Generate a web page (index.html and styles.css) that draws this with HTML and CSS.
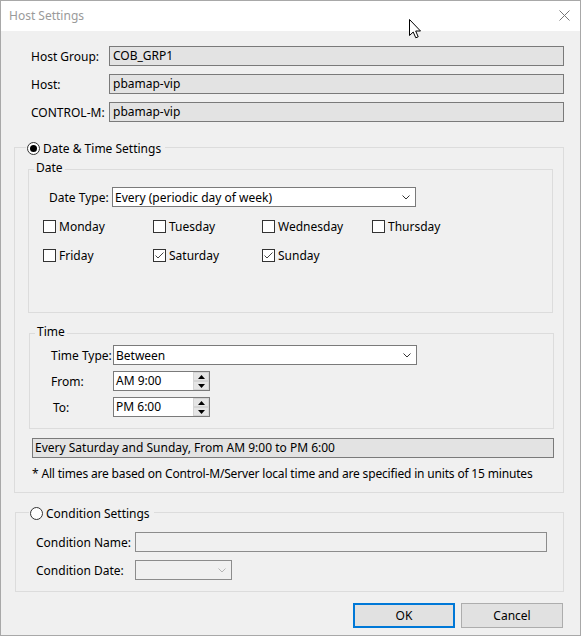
FILE: index.html
```html
<!DOCTYPE html>
<html>
<head>
<meta charset="utf-8">
<link rel="stylesheet" href="styles.css">
</head>
<body>
<div class="window">
  <div class="titlebar">
    <span class="title">Host Settings</span>
    <svg class="close" width="11" height="11" viewBox="0 0 11 11"><path d="M0.5 0.5 L10.5 10.5 M10.5 0.5 L0.5 10.5" stroke="#777" stroke-width="1" fill="none"/></svg>
  </div>
  <div class="content">
    <div class="info">
      <div class="row"><span class="lbl">Host Group:</span><div class="field ro">COB_GRP1</div></div>
      <div class="row"><span class="lbl">Host:</span><div class="field ro">pbamap-vip</div></div>
      <div class="row"><span class="lbl">CONTROL-M:</span><div class="field ro">pbamap-vip</div></div>
    </div>

    <fieldset class="group main">
      <legend class="rlegend main-legend"><span class="rl"><span class="radio on"></span><span>Date &amp; Time Settings</span></span></legend>

      <fieldset class="sub date">
        <legend class="slegend date-legend">Date</legend>
        <div class="datetype">
          <span class="dlbl">Date Type:</span>
          <div class="select wide"><span>Every (periodic day of week)</span><svg class="chev" width="8" height="5" viewBox="0 0 8 5"><path d="M0.5 0.5 L4 4 L7.5 0.5" stroke="#333" fill="none"/></svg></div>
        </div>
        <div class="days">
          <div class="day"><span class="cb"></span>Monday</div>
          <div class="day"><span class="cb"></span>Tuesday</div>
          <div class="day"><span class="cb"></span>Wednesday</div>
          <div class="day"><span class="cb"></span>Thursday</div>
          <div class="day"><span class="cb"></span>Friday</div>
          <div class="day"><span class="cb"><svg width="11" height="11" viewBox="0 0 11 11"><path d="M1.5 5.5 L4 8 L9.5 2.5" stroke="#444" stroke-width="1" fill="none"/></svg></span>Saturday</div>
          <div class="day"><span class="cb"><svg width="11" height="11" viewBox="0 0 11 11"><path d="M1.5 5.5 L4 8 L9.5 2.5" stroke="#444" stroke-width="1" fill="none"/></svg></span>Sunday</div>
        </div>
      </fieldset>

      <fieldset class="sub time">
        <legend class="slegend time-legend">Time</legend>
        <div class="trows">
          <span class="tlbl">Time Type:</span>
          <div class="select wide2"><span>Between</span><svg class="chev" width="8" height="5" viewBox="0 0 8 5"><path d="M0.5 0.5 L4 4 L7.5 0.5" stroke="#333" fill="none"/></svg></div>
          <span class="tlbl">From:</span>
          <div class="spin"><span class="spintext">AM 9:00</span><div class="spinbtns"><div class="sbtn"><svg width="7" height="4" viewBox="0 0 7 4"><path d="M0 4 L3.5 0 L7 4 Z" fill="#000"/></svg></div><div class="sbtn"><svg width="7" height="4" viewBox="0 0 7 4"><path d="M0 0 L3.5 4 L7 0 Z" fill="#000"/></svg></div></div></div>
          <span class="tlbl to">To:</span>
          <div class="spin"><span class="spintext">PM 6:00</span><div class="spinbtns"><div class="sbtn"><svg width="7" height="4" viewBox="0 0 7 4"><path d="M0 4 L3.5 0 L7 4 Z" fill="#000"/></svg></div><div class="sbtn"><svg width="7" height="4" viewBox="0 0 7 4"><path d="M0 0 L3.5 4 L7 0 Z" fill="#000"/></svg></div></div></div>
        </div>
      </fieldset>

      <div class="summary">Every Saturday and Sunday, From AM 9:00 to PM 6:00</div>
      <div class="note">* All times are based on Control-M/Server local time and are specified in units of 15 minutes</div>
    </fieldset>

    <fieldset class="group cond">
      <legend class="rlegend cond-legend"><span class="rl"><span class="radio"></span><span>Condition Settings</span></span></legend>
      <div class="crows">
        <span class="clbl">Condition Name:</span>
        <div class="field dis"></div>
        <span class="clbl">Condition Date:</span>
        <div class="select dis small"><span></span><svg class="chev" width="8" height="5" viewBox="0 0 8 5"><path d="M0.5 0.5 L4 4 L7.5 0.5" stroke="#b5b5b5" fill="none"/></svg></div>
      </div>
    </fieldset>

    <div class="buttons">
      <div class="btn default">OK</div>
      <div class="btn">Cancel</div>
    </div>
  </div>

  <svg class="cursor" width="13" height="20" viewBox="0 0 13 20"><path d="M0.5 0.5 L0.5 16.5 L4.2 13 L6.8 18.8 L9.2 17.8 L6.7 12 L11.5 12 Z" fill="#fff" stroke="#000" stroke-width="1" stroke-linejoin="miter"/></svg>
</div>
</body>
</html>
```

FILE: styles.css
```css
* { box-sizing: border-box; }

body {
  margin: 0;
  font-family: "Noto Sans", "Open Sans", sans-serif;
  font-size: 12px;
  color: #000;
  background: #fff;
}

.window {
  position: relative;
  width: 581px;
  height: 636px;
  border: 1px solid #a8a8a8;
  background: #f0f0f0;
  overflow: hidden;
}

.titlebar {
  height: 30px;
  background: #fff;
  display: flex;
  align-items: center;
  justify-content: space-between;
  padding: 0 10px 1px 8px;
}

.title {
  color: #9a9a9a;
  font-size: 12px;
}

.content {
  padding: 15px 16px 0 13px;
}

.info {
  margin-left: 17px;
  display: flex;
  flex-direction: column;
  gap: 8px;
}

.row {
  display: grid;
  grid-template-columns: 78px 1fr;
  align-items: center;
}

.field {
  height: 20px;
  line-height: 18px;
  border: 1px solid #7a7a7a;
  padding-left: 3px;
  white-space: nowrap;
}

.field.ro { background: #e3e3e3; }
.field.dis { background: #f0f0f0; border-color: #8c8c8c; }

fieldset {
  margin: 0;
  border: 1px solid #dcdcdc;
  min-width: 0;
}

legend {
  line-height: 15px;
  height: 15px;
}

.rl {
  display: flex;
  align-items: center;
  gap: 3px;
  padding-top: 1px;
}

.radio {
  width: 13px;
  height: 13px;
  border: 1px solid #333;
  border-radius: 50%;
  background: #fff;
  display: flex;
  align-items: center;
  justify-content: center;
  flex: none;
}

.radio.on::after {
  content: "";
  width: 7px;
  height: 7px;
  border-radius: 50%;
  background: #000;
}

.group.main {
  margin-top: 18px;
  padding: 7px 10px 10px 13px;
}

.main-legend {
  margin-left: -2px;
  padding: 0 4px 0 1px;
}

.sub.date {
  padding: 10px 10px 50px 14px;
}

.slegend {
  padding: 0 2px;
  line-height: 12px;
}
.date-legend { margin-left: -9px; }

.datetype {
  margin-left: 6px;
  display: flex;
  align-items: center;
}

.dlbl { width: 63px; }

.select {
  height: 20px;
  border: 1px solid #7a7a7a;
  background: #fff;
  padding: 0 5px 0 2px;
  display: flex;
  align-items: center;
  justify-content: space-between;
  white-space: nowrap;
}

.select.wide { width: 304px; }
.select.wide2 { width: 304px; }
.select.dis { background: #f0f0f0; border-color: #8c8c8c; width: 97px; }

.chev { flex: none; }

.days {
  margin-top: 13px;
  display: grid;
  grid-template-columns: 110px 109px 110px 110px;
  row-gap: 16px;
}

.day {
  display: flex;
  align-items: center;
  gap: 3px;
  height: 13px;
}

.cb {
  width: 13px;
  height: 13px;
  border: 1px solid #333;
  background: #fff;
  flex: none;
  display: flex;
  align-items: center;
  justify-content: center;
}

.sub.time {
  margin: 13px -1px 0 1px;
  padding: 4px 10px 11px 21px;
}

.time-legend { margin-left: -16px; }

.trows {
  display: grid;
  grid-template-columns: 62px auto;
  justify-content: start;
  align-items: center;
  row-gap: 6px;
}

.tlbl.to { padding-left: 2px; }

.spin {
  width: 97px;
  height: 20px;
  border: 1px solid #7a7a7a;
  background: #fff;
  display: flex;
  justify-content: space-between;
  padding-left: 2px;
}

.spintext { line-height: 18px; }

.spinbtns {
  width: 16px;
  display: flex;
  flex-direction: column;
}

.sbtn {
  flex: 1;
  background: #e5e5e5;
  border: 1px solid #d4d4d4;
  display: flex;
  align-items: center;
  justify-content: center;
}

.summary {
  margin: 9px -1px 0 4px;
  height: 20px;
  line-height: 18px;
  border: 1px solid #7a7a7a;
  background: #e3e3e3;
  padding-left: 2px;
  white-space: nowrap;
}

.note {
  margin: 8px 0 0 4px;
  line-height: 16px;
  white-space: nowrap;
  letter-spacing: -0.17px;
}

.group.cond {
  margin: 12px 0 0 1px;
  padding: 12px 16px 11px 20px;
}

.cond-legend {
  margin-left: -7px;
  padding: 0 4px 0 1px;
}

.crows {
  display: grid;
  grid-template-columns: 99px 1fr;
  align-items: center;
  row-gap: 8px;
}

.buttons {
  margin-top: 11px;
  display: flex;
  justify-content: flex-end;
  gap: 6px;
  padding-right: 1px;
}

.btn {
  width: 102px;
  height: 25px;
  background: #e1e1e1;
  border: 1px solid #adadad;
  display: flex;
  align-items: center;
  justify-content: center;
}

.btn.default {
  border: 2px solid #0078d7;
}

.cursor {
  position: absolute;
  left: 408px;
  top: 18px;
}
```
